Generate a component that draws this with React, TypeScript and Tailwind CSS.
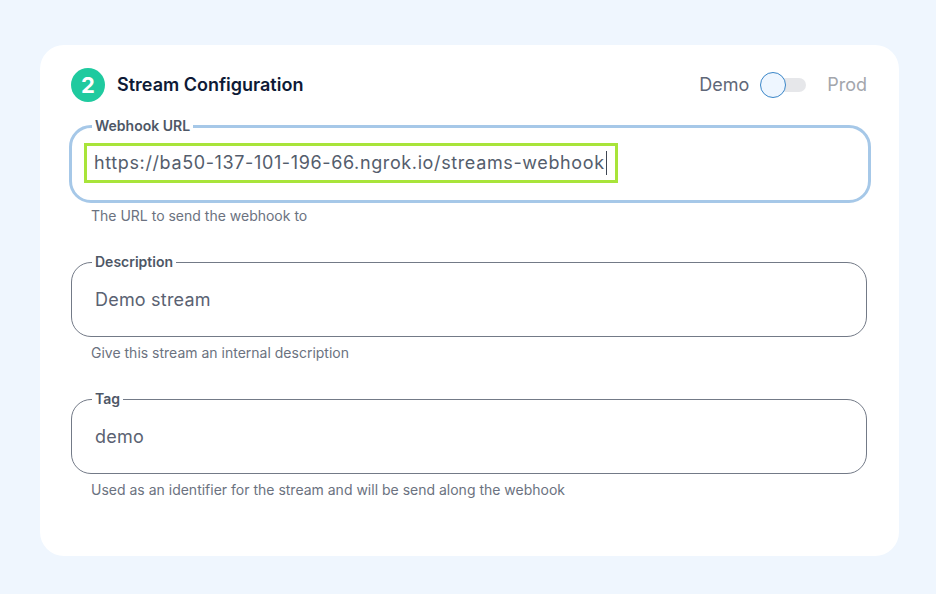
import React from "react";

const Field = ({
  label,
  value,
  helper,
  focused = false,
}: {
  label: string;
  value: string;
  helper: string;
  focused?: boolean;
}) => {
  return (
    <div className={focused ? "-ml-0.5 -mr-1" : ""}>
      <fieldset
        className={
          focused
            ? "rounded-[22px] border-[3px] border-[#a6c8e8] px-0 pb-[17px]"
            : "rounded-[20px] border border-[#737a87] px-0 pb-4"
        }
      >
        <legend className="ml-[20px] px-[3px] text-sm font-semibold leading-4 text-[#4e5766]">
          {label}
        </legend>
        {focused ? (
          <div className="mt-[9px] ml-3 flex">
            <div className="flex h-10 items-center border-[3px] border-[#a8e43a] pl-[7px] pr-[8px] text-lg tracking-[0.62px] text-[#545d6c]">
              {value}
              <span className="ml-px h-6 w-px bg-[#3f4653]" />
            </div>
          </div>
        ) : (
          <div className="mt-[10px] flex h-10 items-center pl-[23px] text-lg tracking-[0.2px] text-[#5a6272]">
            {value}
          </div>
        )}
      </fieldset>
      <p
        className={
          focused
            ? "mt-[3px] ml-[22px] text-sm leading-5 text-[#6b7280]"
            : "mt-1.5 ml-5 text-sm leading-5 text-[#6b7280]"
        }
      >
        {helper}
      </p>
    </div>
  );
};

const App = () => {
  return (
    <div
      className="min-h-[594px] w-full bg-[#eff6fe] pt-[45px] pr-[37px] pb-[39px] pl-10"
      style={{ fontFamily: "Inter, 'Noto Sans', sans-serif" }}
    >
      <div className="rounded-[24px] bg-white pt-[23px] pr-8 pb-[56px] pl-[31px]">
        {/* HEADER */}
        <div className="mb-4 flex items-center justify-between">
          <div className="flex items-center gap-3">
            <div className="flex h-[34px] w-[34px] items-center justify-center rounded-full bg-[#1fca9f] text-[22px] font-bold text-white">
              2
            </div>
            <h2 className="text-lg font-semibold text-[#0e1a36]">
              Stream Configuration
            </h2>
          </div>
          <div className="flex items-center">
            <span className="text-lg text-[#5f6878]">Demo</span>
            <div className="relative ml-[11px] flex h-[26px] w-[46px] items-center">
              <div className="absolute left-[10px] h-[14px] w-9 rounded-full bg-[#e6e7ea]" />
              <div className="absolute left-0 h-[26px] w-[26px] rounded-full border-[1.5px] border-[#3a86c8] bg-[#eef6ff]" />
            </div>
            <span className="ml-[21px] text-lg text-[#a3a6ac]">Prod</span>
          </div>
        </div>

        {/* FIELDS */}
        <div className="flex flex-col gap-7">
          <Field
            label="Webhook URL"
            value="https://ba50-137-101-196-66.ngrok.io/streams-webhook"
            helper="The URL to send the webhook to"
            focused
          />
          <Field
            label="Description"
            value="Demo stream"
            helper="Give this stream an internal description"
          />
          <Field
            label="Tag"
            value="demo"
            helper="Used as an identifier for the stream and will be send along the webhook"
          />
        </div>
      </div>
    </div>
  );
};

export default App;
